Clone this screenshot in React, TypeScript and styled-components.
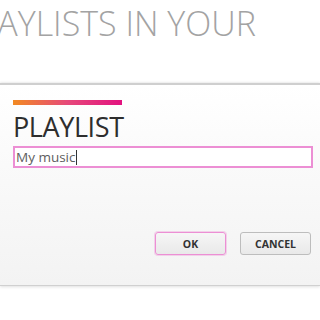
import React from "react";
import styled, { createGlobalStyle } from "styled-components";

const Global = createGlobalStyle`
  html, body { margin: 0; padding: 0; background: #ffffff; }
  body { width: 320px; height: 320px; overflow: hidden; font-family: "Open Sans", "Noto Sans", sans-serif; }
`;

const Page = styled.div`
  width: 320px;
  height: 320px;
  display: flex;
  flex-direction: column;
  background: #ffffff;
`;

const Header = styled.div`
  height: 83px;
  overflow: hidden;
  white-space: nowrap;
`;

const HeaderTitle = styled.h1`
  margin: 0;
  padding-top: 3px;
  margin-left: -40px;
  font-family: "Open Sans", sans-serif;
  font-weight: 300;
  font-size: 34px;
  line-height: 40px;
  color: #a3a3a3;
`;

const Dialog = styled.div`
  height: 203px;
  border-top: 2px solid #cfcfcf;
  border-bottom: 1px solid #d0d0d0;
  box-shadow: 0 1px 3px rgba(0, 0, 0, 0.12), 0 -1px 2px rgba(0, 0, 0, 0.06);
  background: linear-gradient(180deg, #ffffff 0%, #fafafa 40%, #f3f3f3 100%);
  padding: 15px 7px 0 13px;
  box-sizing: border-box;
  display: flex;
  flex-direction: column;
`;

const AccentBar = styled.div`
  width: 109px;
  height: 5px;
  background: linear-gradient(90deg, #f28a22 0%, #e6497a 50%, #e2127f 100%);
`;

const Title = styled.h2`
  margin: 6px 0 0 0;
  font-family: "Open Sans", sans-serif;
  font-weight: 400;
  font-size: 27px;
  line-height: 32px;
  color: #2e2e2e;
  letter-spacing: -0.4px;
`;

const Input = styled.div`
  margin-top: 3px;
  height: 22px;
  box-sizing: border-box;
  border: 2px solid #ec8fd4;
  background: #ffffff;
  display: flex;
  align-items: center;
  padding-left: 1px;
  font-family: "Open Sans", sans-serif;
  font-size: 13.5px;
  color: #5e5e5e;
`;

const Caret = styled.span`
  display: inline-block;
  width: 1px;
  height: 15px;
  background: #333;
`;

const Actions = styled.div`
  margin-top: 64px;
  display: flex;
  justify-content: flex-end;
  gap: 14px;
  padding-right: 2px;
`;

const Button = styled.button<{ $primary?: boolean }>`
  width: 71px;
  height: 23px;
  box-sizing: border-box;
  border-radius: 3px;
  border: 1px solid ${(p) => (p.$primary ? "#ec8fd4" : "#bdbdbd")};
  box-shadow: ${(p) => (p.$primary ? "0 0 0 1px rgba(236,143,212,0.35)" : "none")};
  background: linear-gradient(180deg, #f6f6f6 0%, #e9e9e9 100%);
  font-family: "Open Sans", sans-serif;
  font-weight: 700;
  font-size: 10.5px;
  color: #333;
  padding: 0;
  display: flex;
  align-items: center;
  justify-content: center;
`;

export default function App() {
  return (
    <Page>
      <Global />
      <Header>
        <HeaderTitle>PLAYLISTS IN YOUR</HeaderTitle>
      </Header>
      <Dialog>
        <AccentBar />
        <Title>PLAYLIST</Title>
        <Input>
          My music<Caret />
        </Input>
        <Actions>
          <Button $primary>OK</Button>
          <Button>CANCEL</Button>
        </Actions>
      </Dialog>
    </Page>
  );
}
